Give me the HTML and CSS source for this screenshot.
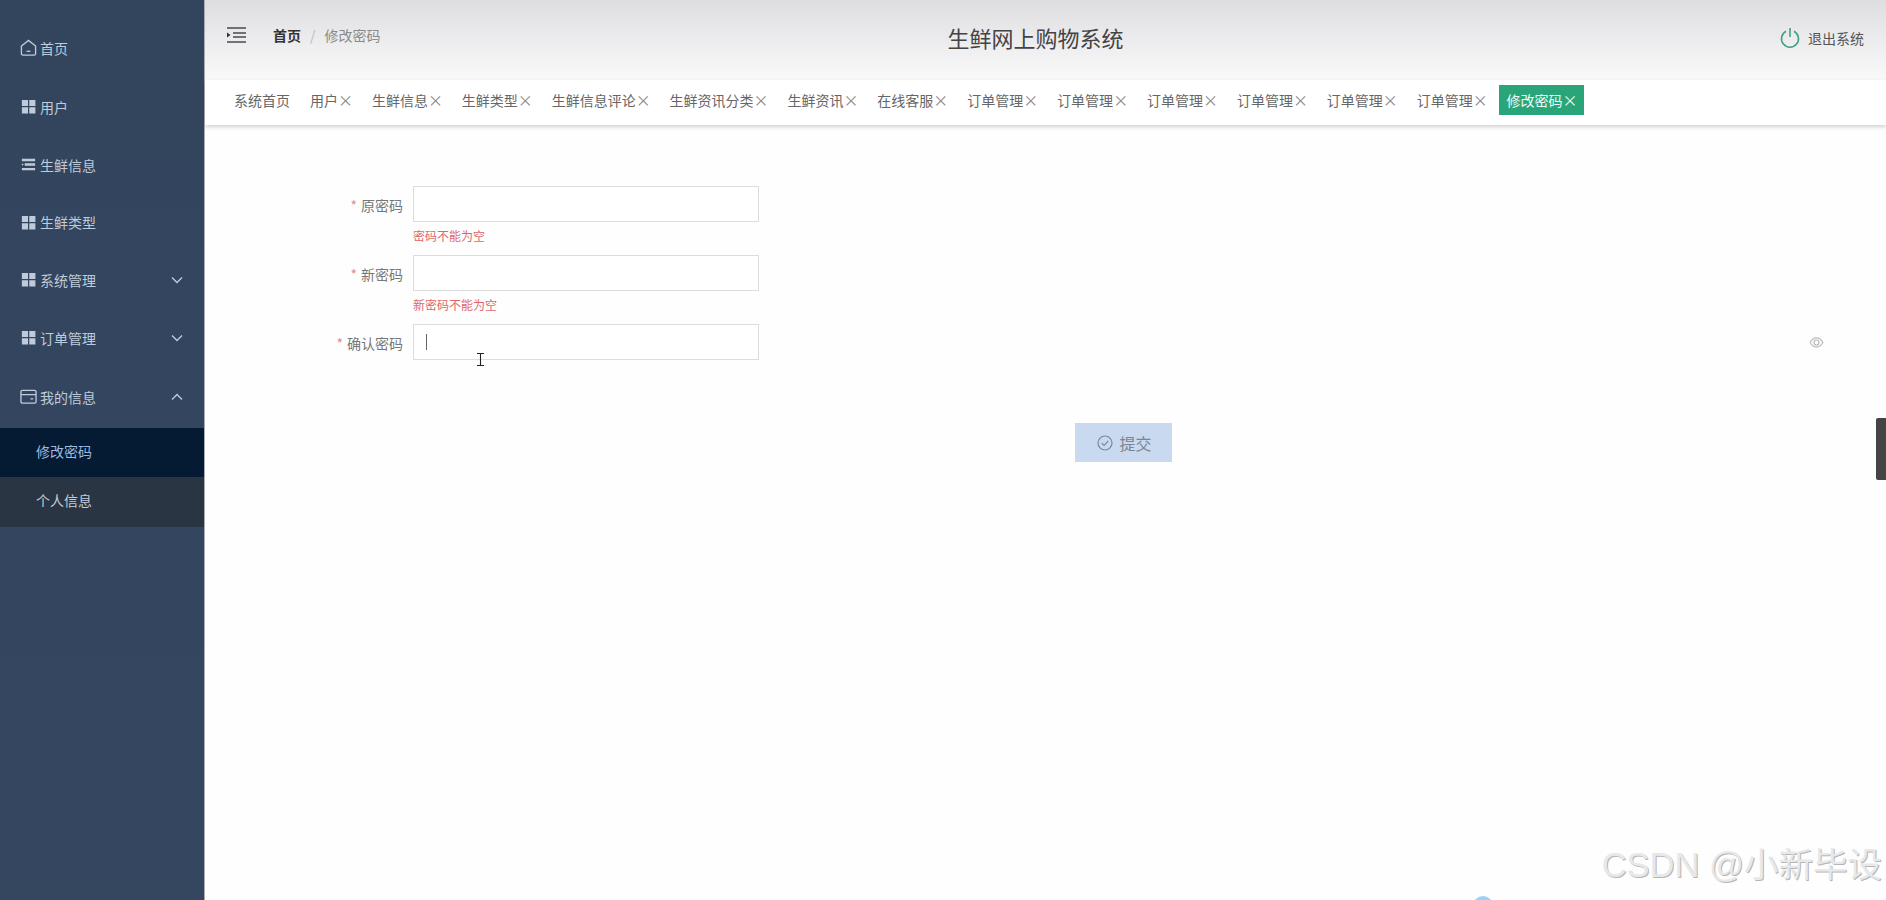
FILE: index.html
```html
<!DOCTYPE html>
<html lang="zh-CN">
<head>
<meta charset="utf-8">
<title>生鲜网上购物系统</title>
<link rel="stylesheet" href="styles.css">
</head>
<body>
<div class="app">
  <aside class="sidebar">
    <nav class="menu">
      <a class="item h59"><svg class="ico" viewBox="0 0 18 18"><path d="M1.500 7.500 9 1.500l7.500 6v8a1.500 1.500 0 0 1-1.500 1.500h-12A1.500 1.500 0 0 1 1.500 15.500z" class="line"/><path d="M7 13h4" class="line"/></svg><span>首页</span></a>
      <a class="item h59"><svg class="ico" viewBox="0 0 18 18"><path d="M2 2h6.500v6.500H2zM9.800 2h6.500v6.500H9.800zM2 9.800h6.500v6.500H2zM9.800 9.800h6.500v6.500H9.800z" class="fill"/></svg><span>用户</span></a>
      <a class="item h57"><svg class="ico" viewBox="0 0 18 18"><path d="M2 3h14v2.500H2zM5 7.800h11v2.500H5zM2 12.600h14v2.500H2zM2 7.800l2 1.250-2 1.250z" class="fill"/></svg><span>生鲜信息</span></a>
      <a class="item h58"><svg class="ico" viewBox="0 0 18 18"><path d="M2 2h6.500v6.500H2zM9.800 2h6.500v6.500H9.800zM2 9.800h6.500v6.500H2zM9.800 9.800h6.500v6.500H9.800z" class="fill"/></svg><span>生鲜类型</span></a>
      <a class="item h57"><svg class="ico" viewBox="0 0 18 18"><path d="M2 2h6.500v6.500H2zM9.800 2h6.500v6.500H9.800zM2 9.800h6.500v6.500H2zM9.800 9.800h6.500v6.500H9.800z" class="fill"/></svg><span>系统管理</span><svg class="chev" viewBox="0 0 12 8"><path d="M1 1.500l5 5 5-5" class="line"/></svg></a>
      <a class="item h59"><svg class="ico" viewBox="0 0 18 18"><path d="M2 2h6.500v6.500H2zM9.800 2h6.500v6.500H9.800zM2 9.800h6.500v6.500H2zM9.800 9.800h6.500v6.500H9.800z" class="fill"/></svg><span>订单管理</span><svg class="chev" viewBox="0 0 12 8"><path d="M1 1.500l5 5 5-5" class="line"/></svg></a>
      <a class="item h59"><svg class="ico" viewBox="0 0 18 18"><rect x="1" y="2.500" width="16" height="13.500" rx="1.500" class="line"/><path d="M1 7h16M11 11.500h3" class="line"/></svg><span>我的信息</span><svg class="chev" viewBox="0 0 12 8"><path d="M1 6.500l5-5 5 5" class="line"/></svg></a>
      <a class="sub sub-active">修改密码</a>
      <a class="sub">个人信息</a>
    </nav>
  </aside>
  <main class="main">
    <header class="topbar">
      <div class="top-left">
        <svg class="fold" viewBox="0 0 19 16"><path d="M0 1h19M6 6h13M6 10h13M0 15h19" class="fold-line"/><path d="M0 5.500 3.500 8 0 10.500z" class="fold-fill"/></svg>
        <div class="crumb"><b>首页</b><i>/</i><span>修改密码</span></div>
      </div>
      <h1 class="title">生鲜网上购物系统</h1>
      <div class="logout">
        <svg class="power" viewBox="0 0 20 22"><path d="M6 4.200a8.500 8.500 0 1 0 8 0" class="power-line"/><path d="M10 1v9" class="power-line"/></svg>
        <span>退出系统</span>
      </div>
    </header>
    <div class="tabs">
      <span class="tab tab-home">系统首页</span>
      <span class="tab">用户<em>×</em></span>
      <span class="tab">生鲜信息<em>×</em></span>
      <span class="tab">生鲜类型<em>×</em></span>
      <span class="tab">生鲜信息评论<em>×</em></span>
      <span class="tab">生鲜资讯分类<em>×</em></span>
      <span class="tab">生鲜资讯<em>×</em></span>
      <span class="tab">在线客服<em>×</em></span>
      <span class="tab">订单管理<em>×</em></span>
      <span class="tab">订单管理<em>×</em></span>
      <span class="tab">订单管理<em>×</em></span>
      <span class="tab">订单管理<em>×</em></span>
      <span class="tab">订单管理<em>×</em></span>
      <span class="tab">订单管理<em>×</em></span>
      <span class="tab tab-active">修改密码<em>×</em></span>
    </div>
    <section class="content">
      <form class="form">
        <div class="row">
          <label class="label"><s>*</s>原密码</label>
          <div class="field"><div class="input"></div><p class="error">密码不能为空</p></div>
        </div>
        <div class="row">
          <label class="label"><s>*</s>新密码</label>
          <div class="field"><div class="input"></div><p class="error">新密码不能为空</p></div>
        </div>
        <div class="row">
          <label class="label"><s>*</s>确认密码</label>
          <div class="field"><div class="input"><span class="caret"></span></div></div>
        </div>
        <div class="actions">
          <button class="submit" type="button"><svg class="check" viewBox="0 0 16 16"><circle cx="8" cy="8" r="7" class="check-line"/><path d="M4.800 8.200l2.300 2.300 4.200-4.600" class="check-line"/></svg>提交</button>
        </div>
      </form>
      <svg class="eye" viewBox="0 0 16 12"><path d="M1 6c2-3.300 4.300-5 7-5s5 1.700 7 5c-2 3.300-4.300 5-7 5s-5-1.700-7-5z" class="eye-line"/><circle cx="8" cy="6" r="2.700" class="eye-line"/></svg>
      <svg class="ibeam" viewBox="0 0 9 14"><path d="M1 1h7M1 13h7M4.500 1v12" class="ibeam-line"/></svg>
      <div class="handle"></div>
      <div class="bubble"></div>
      <div class="watermark">CSDN @小新毕设</div>
    </section>
  </main>
</div>
</body>
</html>
```
FILE: styles.css
```css
* { box-sizing: border-box; }
html, body { margin: 0; height: 100%; }
body {
  font-family: "Noto Sans CJK SC", "Liberation Sans", sans-serif;
  font-size: 14px;
  color: #555;
  background: #fff;
  overflow: hidden;
}
.app { display: flex; height: 900px; }

.sidebar {
  width: 205px;
  flex: none;
  background: linear-gradient(180deg, #33455d 0%, #34465f 45%, #35475f 100%);
  border-right: 1px solid #a9adb3;
}
.menu { display: flex; flex-direction: column; padding-top: 20px; }
.item {
  display: flex;
  align-items: center;
  padding: 0 20px 4px 20px;
  color: #bfcbdb;
}
.h57 { height: 57px; }
.h58 { height: 58px; }
.h59 { height: 59px; }
.item span { margin-left: 3px; flex: 1; }
.ico { width: 17px; height: 17px; flex: none; }
.chev { width: 12px; height: 8px; flex: none; margin-right: 1px; }
.line { fill: none; stroke: #bfcbdb; stroke-width: 1.400; }
.fill { fill: #bfcbdb; }
.sub {
  height: 49px;
  display: flex;
  align-items: center;
  padding: 0 0 3px 36px;
  background: #2a3544;
  color: #c3ccd8;
}
.sub:last-child { height: 50px; padding-bottom: 5px; }
.sub-active { background: #051a33; color: #9fb8dc; }

.main { flex: 1; min-width: 0; display: flex; flex-direction: column; }
.topbar {
  height: 80px;
  flex: none;
  display: grid;
  grid-template-columns: 1fr auto 1fr;
  align-items: center;
  padding: 0 22px 2px 22px;
  background: linear-gradient(180deg, #dedee0 0%, #ececee 50%, #f9f9f9 100%);
}
.top-left { display: flex; align-items: center; gap: 27px; margin-top: -8px; }
.fold { width: 19px; height: 16px; flex: none; }
.fold-line { stroke: #4a4a4a; stroke-width: 1.500; fill: none; }
.fold-fill { fill: #333; }
.crumb { display: flex; align-items: center; }
.crumb b { color: #333; font-weight: 700; }
.crumb i { font-style: normal; color: #bbb; margin: 0 9px; }
.crumb span { color: #8a8a8c; }
.title {
  margin: -4px 20px 0 0;
  font-size: 22px;
  font-weight: 400;
  color: #444;
  line-height: 30px;
}
.logout { display: flex; align-items: center; justify-content: flex-end; gap: 8px; color: #555; margin-top: -2px; }
.power { width: 20px; height: 22px; flex: none; }
.power-line { fill: none; stroke: #3fa382; stroke-width: 1.600; }

.tabs {
  height: 45px;
  flex: none;
  display: flex;
  align-items: center;
  padding: 0 0 6px 21px;
  gap: 6px;
  background: #fff;
  box-shadow: 0 2px 4px rgba(0,0,0,.18);
  position: relative;
  z-index: 1;
}
.tab {
  height: 30px;
  display: flex;
  align-items: center;
  padding: 0 8px;
  color: #666;
  white-space: nowrap;
}
.tab-home { padding-right: 6px; }
.tab em {
  font-style: normal;
  font-size: 15px;
  line-height: 1;
  width: 11.900px;
  color: #888;
  text-align: center;
}
.tab-active { background: #2aa57a; color: #eefaf4; padding-right: 10px; }
.tab-active em { color: #eefaf4; }

.content { flex: 1; position: relative; background: #fefefe; }
.form { display: flex; flex-direction: column; padding-top: 61px; }
.row { display: flex; height: 69px; }
.label {
  width: 198px;
  height: 36px;
  display: flex;
  align-items: center;
  justify-content: flex-end;
  color: #777;
  margin-top: 1px;
}
.label s { text-decoration: none; color: #e58a8a; margin-right: 4px; }
.field { margin-left: 10px; width: 346px; }
.input {
  height: 36px;
  border: 1px solid #ddd;
  background: #fff;
  display: flex;
  align-items: center;
  padding-left: 12px;
}
.caret { width: 1px; height: 16px; background: #666; }
.error { margin: 5px 0 0; font-size: 12px; line-height: 17px; color: #e0666a; }
.actions { display: flex; justify-content: center; margin-top: 30px; padding-left: 156px; }
.submit {
  width: 97px;
  height: 39px;
  border: 0;
  padding: 0 0 0 2px;
  display: flex;
  align-items: center;
  justify-content: center;
  gap: 6px;
  background: #c9daf0;
  color: #7a8590;
  font: inherit;
  font-size: 16px;
}
.check { width: 16px; height: 16px; flex: none; }
.check-line { fill: none; stroke: #7a8894; stroke-width: 1.200; }

.eye { position: absolute; left: 1604px; top: 212px; width: 15px; height: 11px; }
.eye-line { fill: none; stroke: #b9b9b9; stroke-width: 1.300; }
.ibeam { position: absolute; left: 271px; top: 227px; width: 9px; height: 15px; }
.ibeam-line { fill: none; stroke: #222; stroke-width: 1.100; }
.handle {
  position: absolute;
  right: 0;
  top: 293px;
  width: 10px;
  height: 62px;
  background: #444;
  border-radius: 2px 0 0 2px;
}
.bubble {
  position: absolute;
  left: 1268px;
  top: 771px;
  width: 20px;
  height: 20px;
  border-radius: 50%;
  background: #9cd0fb;
}
.watermark {
  position: absolute;
  right: 4px;
  top: 718px;
  font-family: "Liberation Sans", "Noto Sans CJK SC", sans-serif;
  font-size: 34.500px;
  line-height: 44px;
  color: #e8e8e8;
  text-shadow: 1px 1px 0 #b5b5b5;
  white-space: nowrap;
}
```
